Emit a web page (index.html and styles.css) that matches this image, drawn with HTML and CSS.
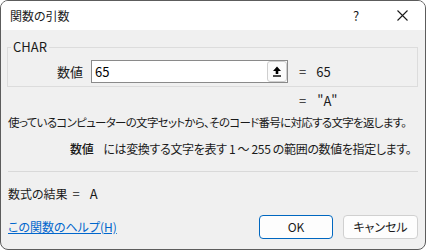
FILE: index.html
```html
<!DOCTYPE html>
<html lang="ja">
<head>
  <meta charset="UTF-8" />
  <title>関数の引数</title>
  <link rel="stylesheet" href="styles.css">
</head>
<body>

  <div class="dialog">
    <div class="titlebar">
      <span class="title">関数の引数</span>
      <span class="title-btn">?</span>
      <span class="title-btn">
        <svg width="11" height="11" viewBox="0 0 11 11"><path d="M0.5 0.5 L10.5 10.5 M10.5 0.5 L0.5 10.5" stroke="#1a1a1a" stroke-width="1.1" fill="none"/></svg>
      </span>
    </div>

    <div class="content">
      <fieldset class="group">
        <legend>CHAR</legend>
        <div class="arg-row">
          <label for="arg1">数値</label>
          <div class="arg-input">
            <input type="text" id="arg1" value="65">
            <button type="button" class="collapse-btn">
              <svg width="10" height="11" viewBox="0 0 10 11"><path d="M5 0.5 L9 5 H6.3 V8 H3.7 V5 H1 Z" fill="#000"/><rect x="1" y="9.3" width="8" height="1.4" fill="#000"/></svg>
            </button>
          </div>
          <span class="eq">=</span>
          <span class="eq-value">65</span>
        </div>
      </fieldset>

      <div class="result-value"><span class="eq">=</span><span class="eq-value">"A"</span></div>

      <p class="desc">使っているコンピューターの文字セットから、そのコード番号に対応する文字を返します。</p>
      <p class="arg-desc"><b>数値</b>には変換する文字を表す 1 ～ 255 の範囲の数値を指定します。</p>

      <hr class="sep">

      <div class="formula-result">数式の結果<span class="formula-eq">=</span><span class="formula-value">A</span></div>

      <div class="footer">
        <a href="#" class="help">この関数のヘルプ(H)</a>
        <button type="button" class="btn btn-ok">OK</button>
        <button type="button" class="btn">キャンセル</button>
      </div>
    </div>
  </div>

</body>
</html>
```

FILE: styles.css
```css
body {
  margin: 0;
  font-family: "Noto Sans CJK JP", "Noto Sans", sans-serif;
  font-size: 12px;
  line-height: 16px;
  color: #1a1a1a;
  background-color: #fff;
  font-feature-settings: "palt";
}

.dialog {
  width: 426px;
  height: 250px;
  box-sizing: border-box;
  border: 1px solid #5c5c5c;
  border-radius: 8px;
  overflow: hidden;
  display: flex;
  flex-direction: column;
  background-color: #f0f0f0;
}

.titlebar {
  height: 29px;
  flex: none;
  display: flex;
  align-items: center;
  background-color: #fff;
}

.title {
  flex: 1;
  padding-left: 9px;
}

.title-btn {
  width: 46px;
  height: 29px;
  display: flex;
  align-items: center;
  justify-content: center;
  font-size: 13px;
}

.content {
  padding: 0 7px 0 6px;
}

.group {
  margin: 10px 0 0;
  padding: 6px 0 3px;
  border: 1px solid #dcdcdc;
  border-radius: 0;
}

.group legend {
  margin-left: 3px;
  padding: 0 2px;
  font-size: 13px;
  line-height: 14px;
}

.arg-row {
  display: flex;
  align-items: center;
}

.arg-row label {
  width: 75px;
  margin-right: 8px;
  text-align: right;
  font-size: 13px;
}

.arg-input {
  position: relative;
  height: 23px;
}

.arg-input input {
  width: 197px;
  height: 23px;
  box-sizing: border-box;
  margin: 0;
  padding: 0 24px 0 3px;
  border: 1px solid #8a8a8a;
  background: #fff;
  font: inherit;
  font-size: 13px;
  color: #000;
  outline: none;
}

.collapse-btn {
  position: absolute;
  top: 1px;
  right: 1px;
  width: 20px;
  height: 21px;
  padding: 0;
  border: 1px solid #cfcfcf;
  border-radius: 3px;
  background: #fbfbfb;
  display: flex;
  align-items: center;
  justify-content: center;
}

.eq {
  margin-left: 11px;
  font-size: 13px;
}

.eq-value {
  margin-left: 10px;
  font-size: 13px;
}

.result-value {
  margin-top: 6px;
  padding-left: 281px;
}

.result-value .eq-value {
  margin-left: 11px;
}

.desc {
  margin: 5px 0 0 1px;
  font-size: 11.5px;
  letter-spacing: -0.7px;
  white-space: nowrap;
}

.arg-desc {
  margin: 11px 0 0;
  padding-left: 63px;
  letter-spacing: -0.35px;
  white-space: nowrap;
}

.arg-desc b {
  margin-right: 10px;
  font-weight: 500;
}

.sep {
  margin: 14px 0 0 1px;
  border: none;
  border-top: 1px solid #d9d9d9;
  height: 0;
}

.formula-result {
  margin: 14px 0 0 1px;
  font-size: 12px;
}

.formula-eq {
  margin-left: 5px;
  font-size: 13px;
}

.formula-value {
  margin-left: 10px;
  font-size: 13px;
}

.footer {
  margin-top: 13px;
  display: flex;
  align-items: center;
  gap: 10px;
}

.help {
  flex: 1;
  margin-left: 1px;
  color: #0066cc;
  text-decoration: underline;
}

.btn {
  width: 75px;
  height: 24px;
  padding: 0;
  border: 1px solid #d0d0d0;
  border-radius: 4px;
  background-color: #fdfdfd;
  font: inherit;
  color: #1a1a1a;
}

.btn-ok {
  width: 74px;
  border-color: #0067c0;
}
```
